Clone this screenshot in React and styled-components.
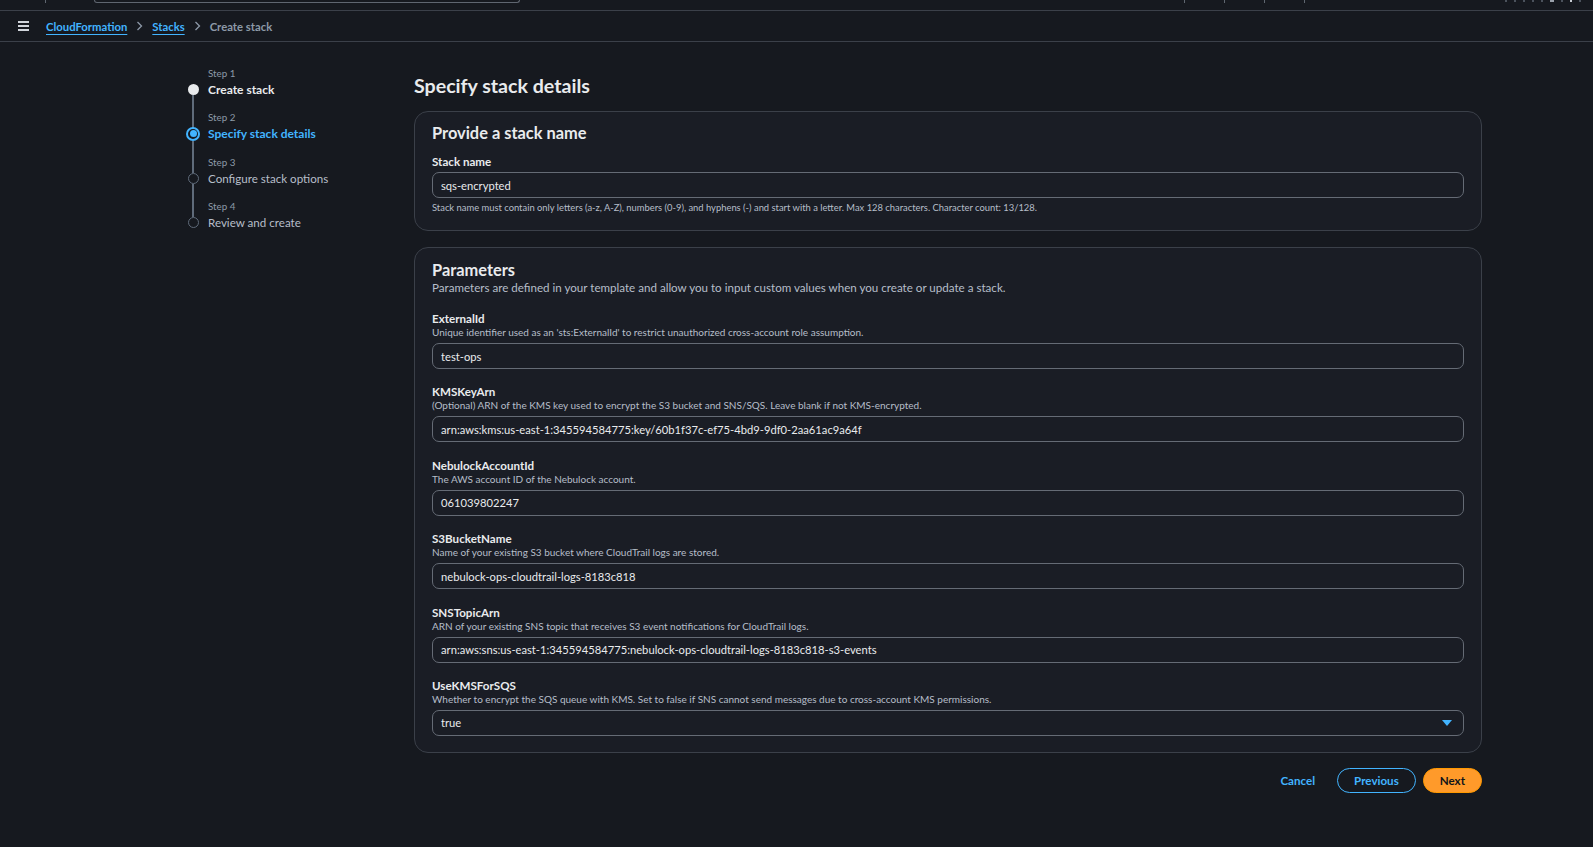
import React from "react";
import styled, { createGlobalStyle } from "styled-components";

const Global = createGlobalStyle`
  html, body { margin: 0; padding: 0; background: #16191f; }
  body { font-family: Lato, "Open Sans", sans-serif; color: #d1d5db; }
  * { box-sizing: border-box; }
`;

const Page = styled.div`
  min-height: 847px;
  background: #16191f;
`;

const TopBar = styled.div`
  height: 11px;
  border-bottom: 1px solid #3b4049;
  display: flex;
  align-items: flex-start;
  position: relative;
  overflow: hidden;
`;

const Tick = styled.span`
  width: 1px;
  height: 3px;
  background: #5f6670;
  margin-left: ${(p) => p.$ml}px;
`;

const SearchEdge = styled.div`
  margin-left: 48px;
  width: 426px;
  height: 3px;
  border: 1px solid #5f6670;
  border-top: none;
  border-radius: 0 0 3px 3px;
`;

const RightTicks = styled.div`
  margin-left: auto;
  display: flex;
  align-items: flex-start;
  gap: 39px;
  padding-right: 288px;
`;

const Dots = styled.div`
  position: absolute;
  right: 12px;
  top: 0;
  display: flex;
  gap: 7px;
`;

const Dot = styled.span`
  width: ${(p) => p.$w || 2}px;
  height: 2px;
  background: ${(p) => p.$c || "#4b525c"};
`;

const Crumbs = styled.nav`
  height: 31px;
  border-bottom: 1px solid #3b4049;
  display: flex;
  align-items: center;
  padding-left: 18px;
  font-size: 11.3px;
  font-weight: 700;
`;

const Burger = styled.div`
  width: 11px;
  display: flex;
  flex-direction: column;
  gap: 2px;
  margin-right: 17px;
  span { height: 2px; background: #d1d5db; display: block; }
`;

const CrumbLink = styled.a`
  color: #42b4ff;
  text-decoration: underline;
  text-underline-offset: 3px;
  text-decoration-thickness: 1px;
`;

const CrumbCurrent = styled.span`
  color: #8d99a8;
`;

const Chev = styled.span`
  display: inline-flex;
  margin: 0 9px;
  color: #8d99a8;
`;

const Layout = styled.div`
  display: grid;
  grid-template-columns: 227px 1fr;
  padding: 25px 111px 40px 187px;
`;

const Steps = styled.ol`
  list-style: none;
  margin: 0;
  padding: 0;
`;

const Step = styled.li`
  display: grid;
  grid-template-columns: 12px 1fr;
  column-gap: 9px;
  height: 44.4px;
`;

const Rail = styled.div`
  display: flex;
  flex-direction: column;
  align-items: center;
  padding-top: 17px;
`;

const Circle = styled.span`
  width: ${(p) => (p.$current ? 14 : 11)}px;
  height: ${(p) => (p.$current ? 14 : 11)}px;
  flex: none;
  border-radius: 50%;
  margin-top: ${(p) => (p.$current ? -1.5 : 0)}px;
  background: ${(p) => (p.$done ? "#e9ebed" : "transparent")};
  border: ${(p) =>
    p.$done ? "none" : p.$current ? "2px solid #42b4ff" : "1.5px solid #5f6b7a"};
  display: flex;
  align-items: center;
  justify-content: center;
  &::after {
    content: "";
    display: ${(p) => (p.$current ? "block" : "none")};
    width: 7px;
    height: 7px;
    border-radius: 50%;
    background: #42b4ff;
  }
`;

const Line = styled.span`
  width: 1.5px;
  flex: 1;
  background: #5f6b7a;
  margin-bottom: -17px;
  display: ${(p) => (p.$last ? "none" : "block")};
`;

const StepNum = styled.div`
  font-size: 9.8px;
  color: #8d99a8;
  line-height: 12px;
`;

const StepName = styled.div`
  font-size: ${(p) => (p.$muted ? 11.6 : 12)}px;
  font-weight: ${(p) => (p.$muted ? 400 : 700)};
  color: ${(p) => (p.$current ? "#42b4ff" : p.$muted ? "#b6bec9" : "#e9ebed")};
  line-height: 17px;
  margin-top: 2px;
`;

const Main = styled.main`
  display: flex;
  flex-direction: column;
  padding-top: 5px;
`;

const H1 = styled.h1`
  margin: 0 0 13px;
  font-size: 19.6px;
  line-height: 24px;
  font-weight: 700;
  color: #e9ebed;
  padding-top: 2px;
`;

const Card = styled.section`
  background: #1a1d25;
  border: 1px solid #3b4049;
  border-radius: 14px;
  padding: ${(p) => p.$pt}px 17px ${(p) => p.$pb}px;
  margin-bottom: 16px;
`;

const H2 = styled.h2`
  margin: 0;
  font-size: 16.4px;
  line-height: 20px;
  font-weight: 700;
  color: #e9ebed;
`;

const CardDesc = styled.p`
  margin: 0;
  font-size: 11.6px;
  line-height: 15px;
  color: #b6bec9;
`;

const Fields = styled.div`
  display: flex;
  flex-direction: column;
  gap: ${(p) => p.$gap}px;
  margin-top: ${(p) => p.$mt}px;
`;

const Field = styled.div`
  display: flex;
  flex-direction: column;
`;

const Label = styled.label`
  font-size: 11.6px;
  font-weight: 700;
  line-height: 14px;
  color: #e9ebed;
`;

const Desc = styled.div`
  font-size: 10px;
  line-height: 13px;
  color: #b6bec9;
`;

const Hint = styled.div`
  font-size: 9.4px;
  line-height: 13px;
  color: #b6bec9;
  margin-top: 3px;
`;

const Input = styled.div`
  margin-top: ${(p) => p.$mt || 4}px;
  height: 26px;
  border: 1px solid #656b75;
  border-radius: 7px;
  padding: 0 8px;
  display: flex;
  align-items: center;
  font-size: 11.2px;
  color: #e9ebed;
  background: #1a1d25;
`;

const Caret = styled.span`
  margin-left: auto;
  margin-right: 3px;
  width: 0;
  height: 0;
  border-left: 5px solid transparent;
  border-right: 5px solid transparent;
  border-top: 6px solid #42b4ff;
`;

const Actions = styled.div`
  display: flex;
  justify-content: flex-end;
  align-items: center;
  gap: 7px;
  margin-top: -1px;
`;

const LinkBtn = styled.button`
  background: none;
  border: none;
  color: #42b4ff;
  font: 700 11.6px Lato, sans-serif;
  padding: 0 10px;
  margin-right: 5px;
  height: 25px;
`;

const Btn = styled.button`
  height: 25px;
  border-radius: 20px;
  padding: 0 16px;
  font: 700 11.6px Lato, sans-serif;
  border: ${(p) => (p.$primary ? "1px solid #ff9900" : "1.5px solid #42b4ff")};
  background: ${(p) => (p.$primary ? "#ff9a2a" : "transparent")};
  color: ${(p) => (p.$primary ? "#0f141a" : "#42b4ff")};
`;

const steps = [
  { n: 1, name: "Create stack", state: "done" },
  { n: 2, name: "Specify stack details", state: "current" },
  { n: 3, name: "Configure stack options", state: "todo" },
  { n: 4, name: "Review and create", state: "todo" },
];

const params = [
  {
    name: "ExternalId",
    desc: "Unique identifier used as an 'sts:ExternalId' to restrict unauthorized cross-account role assumption.",
    value: "test-ops",
  },
  {
    name: "KMSKeyArn",
    desc: "(Optional) ARN of the KMS key used to encrypt the S3 bucket and SNS/SQS. Leave blank if not KMS-encrypted.",
    value: "arn:aws:kms:us-east-1:345594584775:key/60b1f37c-ef75-4bd9-9df0-2aa61ac9a64f",
  },
  {
    name: "NebulockAccountId",
    desc: "The AWS account ID of the Nebulock account.",
    value: "061039802247",
  },
  {
    name: "S3BucketName",
    desc: "Name of your existing S3 bucket where CloudTrail logs are stored.",
    value: "nebulock-ops-cloudtrail-logs-8183c818",
  },
  {
    name: "SNSTopicArn",
    desc: "ARN of your existing SNS topic that receives S3 event notifications for CloudTrail logs.",
    value: "arn:aws:sns:us-east-1:345594584775:nebulock-ops-cloudtrail-logs-8183c818-s3-events",
  },
  {
    name: "UseKMSForSQS",
    desc: "Whether to encrypt the SQS queue with KMS. Set to false if SNS cannot send messages due to cross-account KMS permissions.",
    value: "true",
    select: true,
  },
];

const Chevron = () => (
  <Chev>
    <svg width="7" height="10" viewBox="0 0 7 10" fill="none">
      <path d="M1.5 1l4 4-4 4" stroke="currentColor" strokeWidth="1.3" />
    </svg>
  </Chev>
);

export default function App() {
  return (
    <Page>
      <Global />
      <TopBar>
        <Tick $ml={45} />
        <SearchEdge />
        <RightTicks>
          <Tick $ml={0} />
          <Tick $ml={0} />
          <Tick $ml={0} />
          <Tick $ml={0} />
        </RightTicks>
        <Dots>
          <Dot />
          <Dot />
          <Dot />
          <Dot />
          <Dot />
          <Dot $w={4} $c="#9aa1ab" />
          <Dot />
          <Dot $c="#c7ccd3" />
          <Dot />
        </Dots>
      </TopBar>
      <Crumbs>
        <Burger>
          <span />
          <span />
          <span />
        </Burger>
        <CrumbLink>CloudFormation</CrumbLink>
        <Chevron />
        <CrumbLink>Stacks</CrumbLink>
        <Chevron />
        <CrumbCurrent>Create stack</CrumbCurrent>
      </Crumbs>
      <Layout>
        <Steps>
          {steps.map((s, i) => (
            <Step key={s.n}>
              <Rail>
                <Circle $done={s.state === "done"} $current={s.state === "current"} />
                <Line $last={i === steps.length - 1} />
              </Rail>
              <div>
                <StepNum>Step {s.n}</StepNum>
                <StepName $current={s.state === "current"} $muted={s.state === "todo"}>
                  {s.name}
                </StepName>
              </div>
            </Step>
          ))}
        </Steps>
        <Main>
          <H1>Specify stack details</H1>
          <Card $pt={11} $pb={16}>
            <H2>Provide a stack name</H2>
            <Fields $gap={0} $mt={12}>
              <Field>
                <Label>Stack name</Label>
                <Input $mt={3}>sqs-encrypted</Input>
                <Hint>
                  Stack name must contain only letters (a-z, A-Z), numbers (0-9), and hyphens (-) and start with a
                  letter. Max 128 characters. Character count: 13/128.
                </Hint>
              </Field>
            </Fields>
          </Card>
          <Card $pt={12} $pb={16}>
            <H2>Parameters</H2>
            <CardDesc>
              Parameters are defined in your template and allow you to input custom values when you create or update
              a stack.
            </CardDesc>
            <Fields $gap={16.4} $mt={17}>
              {params.map((p) => (
                <Field key={p.name}>
                  <Label>{p.name}</Label>
                  <Desc>{p.desc}</Desc>
                  <Input>
                    {p.value}
                    {p.select && <Caret />}
                  </Input>
                </Field>
              ))}
            </Fields>
          </Card>
          <Actions>
            <LinkBtn>Cancel</LinkBtn>
            <Btn>Previous</Btn>
            <Btn $primary>Next</Btn>
          </Actions>
        </Main>
      </Layout>
    </Page>
  );
}
